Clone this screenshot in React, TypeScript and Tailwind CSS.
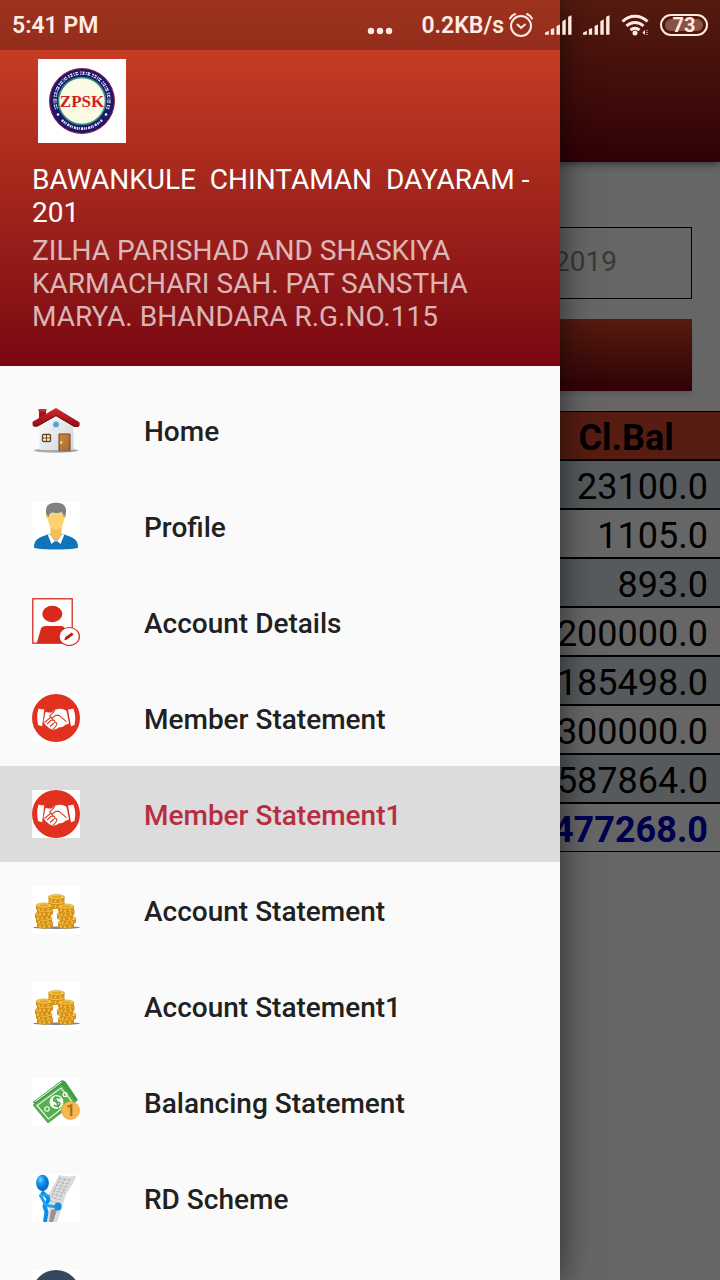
import type { ReactNode } from "react";

const ROWS = ["23100.0", "1105.0", "893.0", "200000.0", "185498.0", "300000.0", "587864.0"];

function Logo() {
  return (
    <svg viewBox="0 0 88 84" className="h-[84px] w-[88px] bg-white" role="img" aria-label="ZPSK">
      <circle cx="44" cy="42" r="32.5" fill="#1d1769" stroke="#a02050" strokeWidth="1" />
      <circle cx="44" cy="42" r="23.5" fill="#fbfbe4" stroke="#2c8f7c" strokeWidth="1.6" />
      <path d="M18.5 50A27 27 0 1 1 69.5 50" fill="none" stroke="#e6e3f5" strokeWidth="3.2" strokeDasharray="1.6 .8 2.4 1.1 1 .7 3 1.7" />
      <path d="M18.5 50A27 27 0 1 1 69.5 50" fill="none" stroke="#1d1769" strokeWidth="1.1" strokeDasharray="1.4 1.1 2 .6" />
      <path d="M24 61A27.5 27.5 0 0 0 64 61" fill="none" stroke="#e6e3f5" strokeWidth="2.6" strokeDasharray="2 .8 1.4 .7 1 1.2" />
      <circle cx="20" cy="55.500" r="1.300" fill="#fff" />
      <circle cx="68" cy="55.500" r="1.300" fill="#fff" />
      <text x="44" y="47.500" textAnchor="middle" fill="#cf2027" fontSize="17" fontWeight="700" fontFamily="Liberation Serif, serif">ZPSK</text>
    </svg>
  );
}

function Icon({ children, white = true }: { children: ReactNode; white?: boolean }) {
  return (
    <svg viewBox="0 0 48 48" aria-hidden="true" className={white ? "size-12 shrink-0 bg-white" : "size-12 shrink-0"}>
      {children}
    </svg>
  );
}

function HomeIcon() {
  return (
    <Icon white={false}>
      <defs>
        <linearGradient id="wall" x2="1" y2="1"><stop stopColor="#fff" /><stop offset="1" stopColor="#cfd3da" /></linearGradient>
        <linearGradient id="roof" x2="0" y2="1"><stop stopColor="#d8262d" /><stop offset="1" stopColor="#8f0d15" /></linearGradient>
        <linearGradient id="door" x2="1" y2="1"><stop stopColor="#d08a45" /><stop offset="1" stopColor="#a9642a" /></linearGradient>
      </defs>
      <ellipse cx="24" cy="44.500" rx="22" ry="2.200" fill="#a9a9a9" />
      <path d="M7 4h7v11H7z" fill="#a5131b" />
      <path d="M6.500 3h8v2.500h-8z" fill="#c4343a" />
      <path d="M7.500 17 24 5l17.500 13v26H7.500z" fill="url(#wall)" />
      <path d="M24 2 1 15.500c-1 1-.6 5 1 5h3.500L24 10l18.500 11H46c1.600 0 2.400-4 1-5z" fill="url(#roof)" />
      <path d="M2 20h3.500L24 9.500 42.500 20.500H46" fill="none" stroke="#7d0b12" strokeWidth="1" />
      <circle cx="24" cy="18.500" r="3.200" fill="#4aa3cb" stroke="#c2dbe6" strokeWidth="1" />
      <rect x="10.500" y="28.500" width="8" height="7" rx="1" fill="#fff5c9" stroke="#68482e" strokeWidth="1.400" />
      <path d="M14.500 28.500v7M10.500 32h8" stroke="#68482e" strokeWidth="1" />
      <path d="M27 28h11v17H27z" fill="url(#door)" stroke="#70401c" strokeWidth="1" />
      <circle cx="29.200" cy="36.500" r="1.200" fill="#ffe2a0" />
      <path d="M26 44.500h13V46H26z" fill="#8b8b8b" />
    </Icon>
  );
}

function ProfileIcon() {
  return (
    <Icon>
      <path d="M2 46c0-8 3-10 15-14h14c12 4 15 6 15 14-10 2-34 2-44 0z" fill="#1173b8" />
      <path d="m17 31 7 9 7-9 1 2.500L28.500 42 24 38l-4.500 4-3.500-8.500z" fill="#fff" />
      <path d="M18.500 24h11v9L24 39.500 18.500 33z" fill="#f5bd55" />
      <path d="M15 11c-2 0-1.500 5 .8 6C17 24 20 28 24 28s7-4 8.200-11c2.300-1 2.800-6 .8-6z" fill="#ffd06f" />
      <path d="M14.500 13C12.500 5 16 .8 24 .8S35.500 5 33.500 13l-1.800 2c0-3-1-4.500-3-4.800-2.500 1.600-6 .5-8 .2-2.700.4-3.700 1.600-4 4.600z" fill="#7f8080" />
    </Icon>
  );
}

function AccountIcon() {
  return (
    <Icon>
      <rect x=".8" y=".8" width="39.400" height="44.400" fill="#fff" stroke="#d9281c" strokeWidth="1.300" />
      <ellipse cx="20.300" cy="16" rx="10" ry="8.300" fill="#d9281c" />
      <path d="M4.800 45 9 30.500Q10 28 13 28h16q3 0 4 3l4 14z" fill="#d9281c" />
      <ellipse cx="37.200" cy="38.500" rx="10.200" ry="9" fill="#fff" stroke="#d9281c" strokeWidth="1.200" />
      <path d="m32.300 42.200.8-3 6.600-4.700 2 1.900-6.600 5z" fill="#b91d14" />
    </Icon>
  );
}

function HandshakeIcon() {
  return (
    <Icon>
      <circle cx="24" cy="24" r="24" fill="#e0321f" />
      <path d="m6.500 14.800 5.800.6-2.200 16.800-4-1.200C4.800 25 4.900 19 6.500 14.800zM41.500 14.800l-5.500.7 3 16.700 3.500-1.200c1.400-6 .8-11-1-16.200z" fill="#fff" />
      <path d="m13.500 18 5.500.7 4.600-3.200c4-1.300 7.700-1 10.900 1.400l2.500 12.600-4 1.500c-1.800 1.900-3.700 2.600-6 2.200-1.500 1.600-4 1.900-6 2.800-3-1-5-3-7.500-5L11.500 28z" fill="#fff" />
      <path d="m23 16.500-5.300 5.700c1 2 3.700 1.700 6.300-1l3 .2 7.500 6.300M12.500 28.500l5.500-4.700c2-.5 3 1 2.300 2.500 1.700-.6 3 .7 2.500 2.300 2-.3 2.700 1.700 1.200 3.400L20.500 36M15 30l4.500-4M18 32.500l4-3.500" fill="none" stroke="#e0321f" strokeWidth="1.100" strokeLinejoin="round" />
    </Icon>
  );
}

function Coin({ x, y }: { x: number; y: number }) {
  return (
    <g>
      <path d={`M${x - 8} ${y}v3.200c0 3.600 16 3.600 16 0V${y}z`} fill="#d8901a" />
      <path d={`M${x - 5} ${y + 2.500}v2.500M${x - 1} ${y + 3}v2.500M${x + 4} ${y + 2.500}v2.500`} stroke="#f6c542" strokeWidth="1.500" />
      <ellipse cx={x} cy={y} rx="8" ry="2.600" fill="#f8ca45" stroke="#b87512" strokeWidth=".4" />
      <ellipse cx={x} cy={y} rx="5" ry="1.300" fill="#e2a828" />
    </g>
  );
}

function CoinsIcon() {
  return (
    <Icon>
      <ellipse cx="24.500" cy="41.500" rx="23.500" ry="1.400" fill="#858585" />
      {[20, 16, 11].map((y) => <Coin key={y} x={24.500} y={y} />)}
      <path d="M21 23h6v17.500h-6z" fill="#fff" />
      <Coin x={13} y={36.500} /><Coin x={12} y={32.500} /><Coin x={11} y={28} /><Coin x={13} y={24} /><Coin x={12} y={19.500} />
      <Coin x={34} y={36.500} /><Coin x={36} y={32.500} /><Coin x={33} y={28.500} /><Coin x={34.500} y={24.500} /><Coin x={34} y={20.500} />
    </Icon>
  );
}

function MoneyIcon() {
  return (
    <Icon>
      <path d="m1 24 29-22 3.500 1.500L46 22l-29 21-2.500-1z" fill="#3fa046" />
      <path d="m1 27 29-21 14 17.500L16 45z" fill="#55ae50" stroke="#3b963f" strokeWidth=".7" />
      <path d="m5 27.500 24-17.500 10.500 13L16.500 41z" fill="none" stroke="#e3f5dc" strokeWidth="1.200" />
      <path d="m3.500 23.500 26-19.500" stroke="#fff" strokeWidth="1" />
      <circle cx="24.500" cy="24" r="7" fill="#f3fbef" />
      <path d="M28 20.500c-3-2.500-7.500-.5-6.200 2 1.200 2 5 .3 6 2.700 1 2.500-3.500 4.300-6 1.800M23 18.500l3.500 11" fill="none" stroke="#43a047" strokeWidth="1.500" />
      <circle cx="15" cy="31" r="2.200" fill="none" stroke="#fff" strokeWidth="1.100" />
      <circle cx="33" cy="16.500" r="2" fill="none" stroke="#fff" strokeWidth="1.100" />
      <circle cx="38.500" cy="32.500" r="9" fill="#f4b84f" stroke="#e7a33b" strokeWidth=".8" />
      <text x="38.500" y="38" textAnchor="middle" fontSize="16" fontWeight="700" fill="#b66c12" fontFamily="Roboto, sans-serif">1</text>
    </Icon>
  );
}

function SchemeIcon() {
  return (
    <Icon>
      <defs>
        <radialGradient id="head" cx=".35" cy=".3"><stop stopColor="#7fd3ff" /><stop offset=".5" stopColor="#159af3" /><stop offset="1" stopColor="#0873cf" /></radialGradient>
      </defs>
      <path d="M27 1q8 2.500 17 .5c-1 6-6 12-10 19-3 7-4 16-9 27.500h-9c-1-6 1-10 1-15-1-4-1-8 0-13 3-7 7-12 10-19z" fill="#dcdcdd" />
      <path d="M28 5l11 1M26 8l12 2M24 11l12 2M22.500 14l12 2M21 17l12 2M20 20l11 3M19 23l10 3M19 27l6 2M28 3l-8 19M33 5 23 25M38 5 28 24" fill="none" stroke="#8f8f94" strokeWidth=".6" strokeDasharray="1.600 1.200 .8 .7" />
      <path d="M19 36q5-2 6 0l-4 12h-4z" fill="#9a9490" />
      <path d="M9.500 18c4 3 7 5 7 8l-4 6 2 6-1.500 10" fill="none" stroke="#0c8ce4" strokeWidth="4" />
      <path d="m8.500 21.500 5.500 10 11.500 1.500" fill="none" stroke="#22a4f4" strokeWidth="3" strokeLinecap="round" strokeLinejoin="round" />
      <path d="M9 22q3-2 8 0" fill="none" stroke="#22a4f4" strokeWidth="2.400" strokeLinecap="round" />
      <ellipse cx="26" cy="32.500" rx="3.600" ry="4" fill="#128de5" />
      <ellipse cx="10.500" cy="9" rx="6.400" ry="8.300" fill="url(#head)" />
    </Icon>
  );
}

function RoundIcon() {
  return (
    <Icon>
      <circle cx="24" cy="24" r="24" fill="#34495e" />
    </Icon>
  );
}

const MENU: { label: string; icon: ReactNode; active?: boolean }[] = [
  { label: "Home", icon: <HomeIcon /> },
  { label: "Profile", icon: <ProfileIcon /> },
  { label: "Account Details", icon: <AccountIcon /> },
  { label: "Member Statement", icon: <HandshakeIcon /> },
  { label: "Member Statement1", icon: <HandshakeIcon />, active: true },
  { label: "Account Statement", icon: <CoinsIcon /> },
  { label: "Account Statement1", icon: <CoinsIcon /> },
  { label: "Balancing Statement", icon: <MoneyIcon /> },
  { label: "RD Scheme", icon: <SchemeIcon /> },
];

function Signal() {
  return (
    <svg viewBox="0 0 28 20" className="h-5 w-[27px]" fill="#ffe9e3" aria-hidden="true">
      <path d="M0 20v-2l4-2v4zM6 14.500l3.500-1.500v7H6zM12 11l3.500-1.500V20H12zM18 6l3.500-2v16H18zM24 1.500 27.500 0v20H24z" />
    </svg>
  );
}

function StatusBar() {
  return (
    <div className="absolute inset-x-0 top-0 flex h-[50px] items-center px-3 text-[23px] font-semibold text-[#ffece6]">
      <span className="pt-[3px]">5:41 PM</span>
      <svg viewBox="0 0 26 8" className="mt-3 mr-7 ml-auto h-2 w-[26px]" fill="#ffe9e3" aria-hidden="true">
        <circle cx="4" cy="4" r="3.200" /><circle cx="13" cy="4" r="3.200" /><circle cx="22" cy="4" r="3.200" />
      </svg>
      <span className="pt-[3px]">0.2KB/s</span>
      <div className="ml-1 flex items-center gap-[11px]">
        <svg viewBox="0 0 26 26" className="size-[26px]" fill="none" stroke="#ffe9e3" strokeWidth="2" strokeLinecap="round" aria-hidden="true">
          <circle cx="13" cy="14" r="10" />
          <path d="m9.500 12.500 3.500 3.500 4-3.500M2 6.500q1.500-3 5-4.500M24 6.500Q22.500 3.500 19 2" />
        </svg>
        <Signal />
        <Signal />
        <svg viewBox="0 0 28 24" className="h-6 w-7" fill="none" stroke="#ffe9e3" strokeWidth="3" aria-hidden="true">
          <path d="M1.500 8.500c7-7 18-7 25 0M5.500 13c5-4.700 12-4.700 17 0M9.500 17.200c2.700-2.500 6.300-2.500 9 0" />
          <circle cx="14" cy="20" r="2.500" fill="#ffe9e3" stroke="none" />
          <path d="m24 17-2.500 2.500L24 22z" fill="#ffe9e3" stroke="none" />
          <path d="M26 17v5" strokeWidth="1" strokeDasharray="1 1" />
        </svg>
        <span className="flex h-[22px] w-12 items-center justify-center rounded-full border-2 border-[#ffe9e3] bg-[#8a5145] bg-clip-content p-[3px] text-xl font-bold">73</span>
      </div>
    </div>
  );
}

function StatementPage() {
  return (
    <main className="flex h-full flex-col bg-white">
      <header className="h-[162px] bg-linear-to-b from-[#d44428] to-[#7a0010] shadow-[0_2px_8px_rgba(0,0,0,0.5)]" />
      <form className="mx-7 mt-[65px] flex flex-col gap-5">
        <input
          readOnly
          aria-label="To date"
          defaultValue="31/03/2019"
          className="ml-auto h-[72px] w-1/2 border border-black pr-[74px] pb-1 text-right text-[28px] text-[#8e8e8e]"
        />
        <button type="button" className="h-[72px] bg-linear-to-b from-[#d44428] to-[#7a0010] text-[28px] text-white shadow-md">
          Show
        </button>
      </form>
      <table className="mt-5 w-full border-separate border-spacing-0 text-4xl">
        <thead>
          <tr>
            <td className="h-[50px] border-t border-b-2 border-black bg-[#d9482d]" />
            <th className="h-[50px] w-[185px] border-t border-b-2 border-black bg-[#d9482d] p-0 pt-1 text-center font-bold">Cl.Bal</th>
          </tr>
        </thead>
        <tbody>
          {ROWS.map((value, i) => (
            <tr key={value} className={i % 2 === 0 ? "bg-[#d6e2e6]" : "bg-white"}>
              <td className="h-[49px] border-b-2 border-black p-0" />
              <td className="h-[49px] border-b-2 border-black p-0 pt-1 pr-3 text-right">{value}</td>
            </tr>
          ))}
          <tr className="font-bold text-[#0000c8]">
            <td className="h-12 border-b border-black p-0" />
            <td className="h-12 border-b border-black p-0 pt-1 pr-3 text-right">1477268.0</td>
          </tr>
        </tbody>
      </table>
    </main>
  );
}

function Drawer() {
  return (
    <aside className="absolute inset-y-0 right-40 left-0 overflow-hidden bg-[#fafafa] shadow-[0_0_32px_rgba(0,0,0,0.6)]">
      <header className="bg-linear-to-b from-[#d24428] to-[#7a0612]">
        <div className="h-[50px] bg-black/25" />
        <div className="pt-[9px] pr-6 pb-[33px] pl-8 text-[28px] leading-[33px]">
          <div className="ml-[6px] flex">
            <Logo />
          </div>
          <p className="mt-5 whitespace-pre-wrap text-white">{"BAWANKULE  CHINTAMAN  DAYARAM - 201"}</p>
          <p className="mt-[5px] text-white/70">ZILHA PARISHAD AND SHASKIYA KARMACHARI SAH. PAT SANSTHA MARYA. BHANDARA R.G.NO.115</p>
        </div>
      </header>
      <nav className="pt-4">
        {MENU.map((item) => (
          <a
            key={item.label}
            href="#"
            aria-current={item.active ? "page" : undefined}
            className={
              item.active
                ? "flex h-24 items-center gap-16 bg-[#dcdcdc] px-8 text-[28px] font-medium text-[#b92d42]"
                : "flex h-24 items-center gap-16 px-8 text-[28px] font-medium text-[#212121]"
            }
          >
            {item.icon}
            <span className="pt-1">{item.label}</span>
          </a>
        ))}
        <a href="#" aria-label="More" className="flex h-24 items-center px-8">
          <RoundIcon />
        </a>
      </nav>
    </aside>
  );
}

export default function App() {
  return (
    <div className="relative h-screen overflow-hidden font-[Roboto,'Noto_Sans',sans-serif]">
      <StatementPage />
      <div className="absolute inset-0 bg-black/60" />
      <Drawer />
      <StatusBar />
    </div>
  );
}
